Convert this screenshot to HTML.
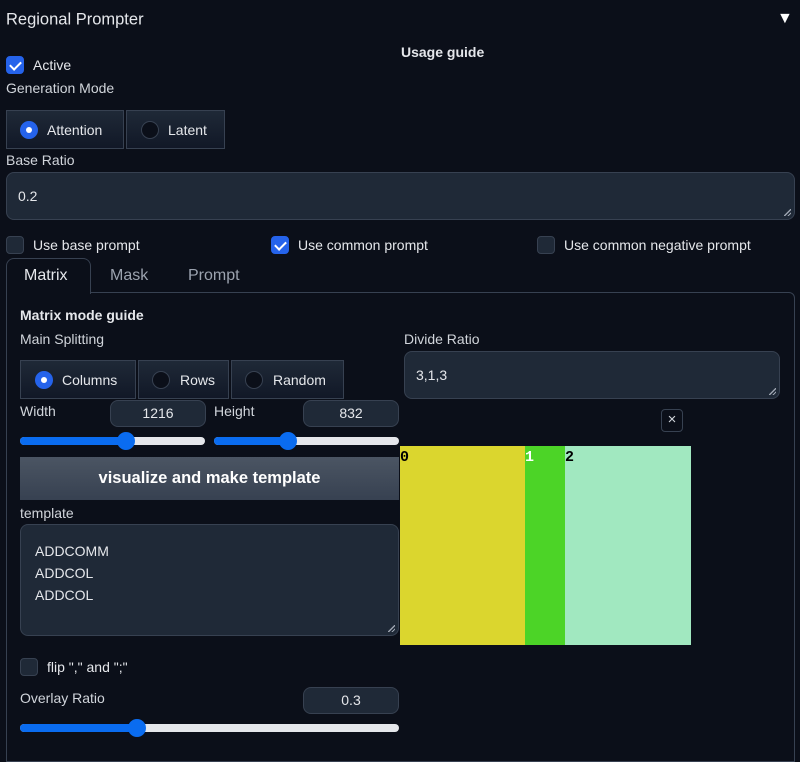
<!DOCTYPE html>
<html><head><style>
*{box-sizing:border-box;margin:0;padding:0}
body{width:800px;height:751px;background:#0b0f19;color:#e5e7eb;font-family:"Liberation Sans",sans-serif;font-size:14px;position:relative;overflow:hidden}
.a{position:absolute;white-space:nowrap}
.t{transform:translateY(-50%)}
.cb{position:absolute;width:18px;height:18px;border-radius:4px;background:#1f2937;border:1px solid #374151}
.cb.on{background:#2563eb;border-color:#2563eb}
.cb.on::after{content:"";position:absolute;left:5px;top:2px;width:5px;height:9px;border:solid #fff;border-width:0 2px 2px 0;transform:rotate(45deg)}
.rb{position:absolute;background:linear-gradient(#1f2937,#111827);border:1px solid #374151}
.rd{position:absolute;width:18px;height:18px;border-radius:50%;background:#0b0f19;border:1px solid #374151;top:50%;transform:translateY(-50%)}
.rd.on{background:#2563eb;border-color:#2563eb}
.rd.on::after{content:"";position:absolute;left:5px;top:5px;width:6px;height:6px;border-radius:50%;background:#fff}
.tb{position:absolute;background:#1f2937;border:1px solid #374151;border-radius:8px}
.num{position:absolute;background:#1f2937;border:1px solid #374151;border-radius:8px;text-align:center;line-height:25px}
.sl{position:absolute;height:8px;border-radius:4px;background:#e5e7eb}
.sl i{position:absolute;left:0;top:0;height:8px;border-radius:4px;background:#0a6cf0}
.sl b{position:absolute;top:-5px;width:18px;height:18px;border-radius:50%;background:#0a6cf0;margin-left:-9px}
.rz{position:absolute;right:3px;bottom:3px;width:7px;height:7px;border-right:0;background:linear-gradient(135deg,transparent 45%,#9ca3af 45%,#9ca3af 58%,transparent 58%,transparent 72%,#9ca3af 72%,#9ca3af 85%,transparent 85%)}
.lbl{color:#d1d5db}
</style></head><body>
<div class="a t" style="left:6px;top:20px;font-size:16.5px;color:#e5e7eb">Regional Prompter</div>
<div class="a t" style="left:777px;top:19px;font-size:16px;color:#fff">▼</div>
<div class="a t" style="left:401px;top:52px;font-weight:bold">Usage guide</div>

<div class="cb on" style="left:6px;top:56px"></div>
<div class="a t" style="left:33px;top:65px">Active</div>
<div class="a t lbl" style="left:6px;top:88px">Generation Mode</div>
<div class="rb" style="left:6px;top:110px;width:118px;height:39px"><div class="rd on" style="left:13px"></div><span class="a t" style="left:40px;top:50%">Attention</span></div>
<div class="rb" style="left:126px;top:110px;width:99px;height:39px"><div class="rd" style="left:14px"></div><span class="a t" style="left:41px;top:50%">Latent</span></div>

<div class="a t lbl" style="left:6px;top:160px">Base Ratio</div>
<div class="tb" style="left:6px;top:172px;width:789px;height:48px"><span class="a t" style="left:11px;top:50%">0.2</span><div class="rz"></div></div>

<div class="cb" style="left:6px;top:236px"></div><div class="a t" style="left:33px;top:245px">Use base prompt</div>
<div class="cb on" style="left:271px;top:236px"></div><div class="a t" style="left:298px;top:245px">Use common prompt</div>
<div class="cb" style="left:537px;top:236px"></div><div class="a t" style="left:564px;top:245px">Use common negative prompt</div>

<div class="a" style="left:6px;top:292px;width:789px;height:470px;border:1px solid #374151;border-radius:0 6px 0 0"></div>
<div class="a" style="left:6px;top:258px;width:85px;height:36px;border:1px solid #374151;border-bottom:none;border-radius:8px 8px 0 0;background:#0b0f19"></div>
<div class="a t" style="left:24px;top:276px;font-size:16px">Matrix</div>
<div class="a t" style="left:110px;top:276px;font-size:16px;color:#9ca3af">Mask</div>
<div class="a t" style="left:188px;top:276px;font-size:16px;color:#9ca3af">Prompt</div>

<div class="a t" style="left:20px;top:315px;font-weight:bold">Matrix mode guide</div>
<div class="a t lbl" style="left:20px;top:339px">Main Splitting</div>
<div class="rb" style="left:20px;top:360px;width:116px;height:39px"><div class="rd on" style="left:14px"></div><span class="a t" style="left:41px;top:50%">Columns</span></div>
<div class="rb" style="left:138px;top:360px;width:91px;height:39px"><div class="rd" style="left:13px"></div><span class="a t" style="left:41px;top:50%">Rows</span></div>
<div class="rb" style="left:231px;top:360px;width:113px;height:39px"><div class="rd" style="left:13px"></div><span class="a t" style="left:41px;top:50%">Random</span></div>

<div class="a t lbl" style="left:404px;top:339px">Divide Ratio</div>
<div class="tb" style="left:404px;top:351px;width:376px;height:48px"><span class="a t" style="left:11px;top:50%">3,1,3</span><div class="rz"></div></div>

<div class="a t lbl" style="left:20px;top:411px">Width</div>
<div class="num" style="left:110px;top:400px;width:96px;height:27px">1216</div>
<div class="a t lbl" style="left:214px;top:411px">Height</div>
<div class="num" style="left:303px;top:400px;width:96px;height:27px">832</div>
<div class="sl" style="left:20px;top:437px;width:185px"><i style="width:106px"></i><b style="left:106px"></b></div>
<div class="sl" style="left:214px;top:437px;width:185px"><i style="width:74px"></i><b style="left:74px"></b></div>

<div class="a" style="left:20px;top:457px;width:379px;height:43px;background:linear-gradient(#4b5563,#374151);text-align:center;line-height:43px;font-weight:bold;font-size:16.5px;color:#fff">visualize and make template</div>

<div class="a" style="left:661px;top:409px;width:22px;height:23px;border:1px solid #374151;border-radius:4px;text-align:center;line-height:20px;font-size:15px;color:#d1d5db">×</div>
<div class="a" style="left:400px;top:446px;width:125px;height:199px;background:#dbd62e"></div>
<div class="a" style="left:525px;top:446px;width:40px;height:199px;background:#4cd427"></div>
<div class="a" style="left:565px;top:446px;width:126px;height:199px;background:#a1e8c0"></div>
<div class="a" style="left:400px;top:449px;font:bold 15px 'Liberation Mono',monospace;color:#000">0</div>
<div class="a" style="left:525px;top:449px;font:bold 15px 'Liberation Mono',monospace;color:#fff">1</div>
<div class="a" style="left:565px;top:449px;font:bold 15px 'Liberation Mono',monospace;color:#000">2</div>

<div class="a t lbl" style="left:20px;top:513px">template</div>
<div class="tb" style="left:20px;top:524px;width:379px;height:112px"><div class="a" style="left:14px;top:15px;line-height:22px">ADDCOMM<br>ADDCOL<br>ADDCOL</div><div class="rz"></div></div>

<div class="cb" style="left:20px;top:658px"></div><div class="a t" style="left:47px;top:667px">flip "," and ";"</div>
<div class="a t lbl" style="left:20px;top:698px">Overlay Ratio</div>
<div class="num" style="left:303px;top:687px;width:96px;height:27px">0.3</div>
<div class="sl" style="left:20px;top:724px;width:379px"><i style="width:117px"></i><b style="left:117px"></b></div>
</body></html>
